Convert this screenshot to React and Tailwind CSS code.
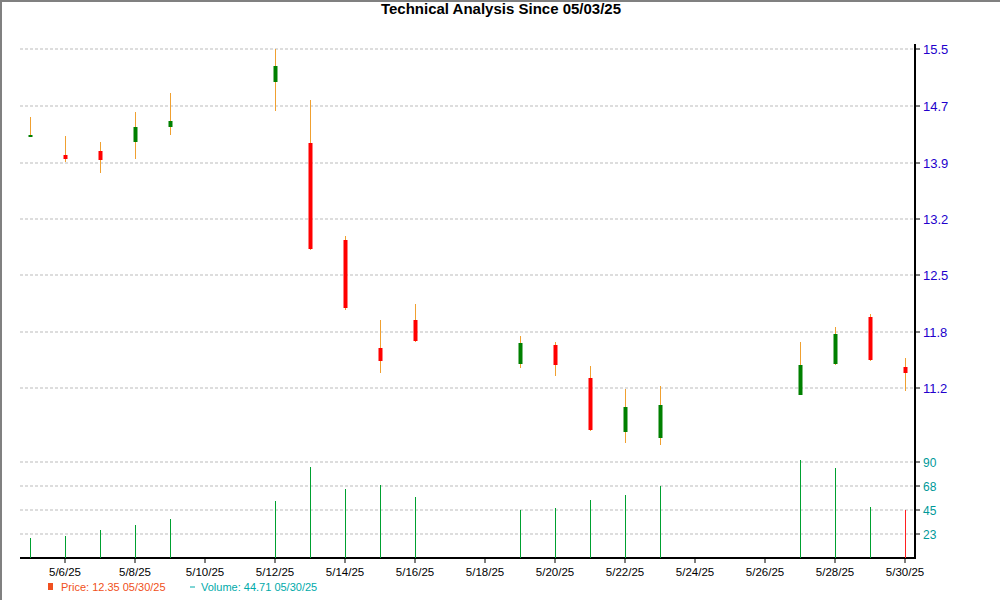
const C=[[30,117,136,135,137,'g'],[65,136,162,155,159,'r'],[100,142,173,151,160,'r'],[135,112,159,127,142,'g'],[170,93,135,121,127,'g'],[275,49,111,66,82,'g'],[310,100,250,143,249,'r'],[345,236,310,240,308,'r'],[380,320,373,348,361,'r'],[415,304,342,320,341,'r'],[520,336,368,343,364,'g'],[555,342,376,345,365,'r'],[590,366,431,378,430,'r'],[625,389,443,407,432,'g'],[660,386,445,405,438,'g'],[800,342,395,365,395,'g'],[835,327,365,334,364,'g'],[870,314,361,317,360,'r'],[905,358,391,367,373,'r']];
const V=[538,536,530,525,519,501,467,489,485,497,510,508,500,495,486,460,468,507,510];
const P=[[49,'15.5'],[106,'14.7'],[163,'13.9'],[219,'13.2'],[275,'12.5'],[332,'11.8'],[388,'11.2']];
const VG=[[462,'90'],[486,'68'],[510,'45'],[534,'23']];
const D=['5/6/25','5/8/25','5/10/25','5/12/25','5/14/25','5/16/25','5/18/25','5/20/25','5/22/25','5/24/25','5/26/25','5/28/25','5/30/25'];
export default function App(){return(
<div className="w-[1000px] h-[600px] bg-white border-2 border-[#808080] border-r-0 border-b-0 relative" style={{fontFamily:'"Liberation Sans",Arial,sans-serif'}}>
<div className="absolute left-0 right-0 top-[-4px] text-center font-bold text-[15px] text-black">Technical Analysis Since 05/03/25</div>
<svg width="1000" height="600" className="absolute left-[-2px] top-[-2px]" fontFamily='"Liberation Sans",Arial,sans-serif'>
{P.map(([y,t])=>(<g key={t}><line x1="20" x2="915" y1={y} y2={y} stroke="#bbb" strokeDasharray="3 2"/><line x1="915" x2="920" y1={y} y2={y} stroke="#000"/><text x="923" y={y+5} fontSize="13" fill="#2200cc">{t}</text></g>))}
{VG.map(([y,t])=>(<g key={t}><line x1="20" x2="915" y1={y} y2={y} stroke="#bbb" strokeDasharray="3 2"/><line x1="915" x2="920" y1={y} y2={y} stroke="#000"/><text x="923" y={y+5} fontSize="12" fill="#009999">{t}</text></g>))}
<line x1="915" x2="915" y1="44" y2="558" stroke="#000" strokeWidth="2"/>
<line x1="20" x2="916" y1="558" y2="558" stroke="#000" strokeWidth="2"/>
{D.map((d,i)=>{const x=65+70*i;return(<g key={d}><line x1={x} x2={x} y1="558" y2="563" stroke="#000"/><text x={x} y="576" fontSize="11.5" textAnchor="middle" fill="#000">{d}</text></g>)})}
{C.map(([x,a,b,t,bt,c])=>(<g key={x}><line x1={x+0.5} x2={x+0.5} y1={a} y2={b} stroke="#f0a030"/><rect x={x-1.5} y={t} width="4" height={Math.max(bt-t,2)} fill={c==='g'?'#008000':'#ff0000'}/></g>))}
{C.map(([x],i)=>(<line key={'v'+x} x1={x+0.5} x2={x+0.5} y1={V[i]} y2="558" stroke={i===18?'#ff2020':'#00a030'}/>))}
<rect x="48" y="583" width="5" height="7" fill="#f05020"/>
<text x="61" y="591" fontSize="11" fill="#f05020">Price: 12.35  05/30/25</text>
<line x1="190" x2="195" y1="587" y2="587" stroke="#00aaaa"/>
<text x="201" y="591" fontSize="11" fill="#00aaaa">Volume: 44.71  05/30/25</text>
</svg></div>)}
